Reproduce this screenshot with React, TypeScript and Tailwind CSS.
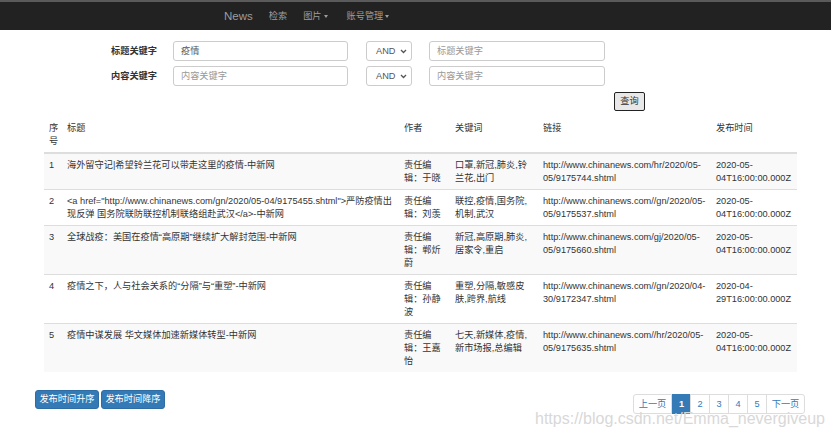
import React from "react";

type Row = {
  id: number;
  title: string[];
  author: string[];
  keywords: string[];
  link: string[];
  time: string[];
};

const rows: Row[] = [
  {
    id: 1,
    title: ["海外留守记|希望铃兰花可以带走这里的疫情-中新网"],
    author: ["责任编", "辑：于晓"],
    keywords: ["口罩,新冠,肺炎,铃", "兰花,出门"],
    link: ["http://www.chinanews.com/hr/2020/05-", "05/9175744.shtml"],
    time: ["2020-05-", "04T16:00:00.000Z"],
  },
  {
    id: 2,
    title: [
      '<a href="http://www.chinanews.com/gn/2020/05-04/9175455.shtml">严防疫情出',
      "现反弹 国务院联防联控机制联络组赴武汉</a>-中新网",
    ],
    author: ["责任编", "辑：刘羡"],
    keywords: ["联控,疫情,国务院,", "机制,武汉"],
    link: ["http://www.chinanews.com//gn/2020/05-", "05/9175537.shtml"],
    time: ["2020-05-", "04T16:00:00.000Z"],
  },
  {
    id: 3,
    title: ["全球战疫：美国在疫情“高原期”继续扩大解封范围-中新网"],
    author: ["责任编", "辑：郸炘", "蔚"],
    keywords: ["新冠,高原期,肺炎,", "居家令,重启"],
    link: ["http://www.chinanews.com/gj/2020/05-", "05/9175660.shtml"],
    time: ["2020-05-", "04T16:00:00.000Z"],
  },
  {
    id: 4,
    title: ["疫情之下，人与社会关系的“分隔”与“重塑”-中新网"],
    author: ["责任编", "辑：孙静", "波"],
    keywords: ["重塑,分隔,敏感皮", "肤,跨界,航线"],
    link: ["http://www.chinanews.com//gn/2020/04-", "30/9172347.shtml"],
    time: ["2020-04-", "29T16:00:00.000Z"],
  },
  {
    id: 5,
    title: ["疫情中谋发展 华文媒体加速新媒体转型-中新网"],
    author: ["责任编", "辑：王嘉", "怡"],
    keywords: ["七天,新媒体,疫情,", "新市场报,总编辑"],
    link: ["http://www.chinanews.com//hr/2020/05-", "05/9175635.shtml"],
    time: ["2020-05-", "04T16:00:00.000Z"],
  },
];

function Lines({ lines }: { lines: string[] }) {
  return (
    <>
      {lines.map((l, i) => (
        <div key={i} className="whitespace-nowrap">
          {l}
        </div>
      ))}
    </>
  );
}

function Chevron() {
  return (
    <svg width="7" height="5" viewBox="0 0 7 5" className="text-[#555]">
      <path d="M1 1 L3.5 3.5 L6 1" fill="none" stroke="currentColor" strokeWidth="1.3" />
    </svg>
  );
}

function Caret() {
  return <span className="ml-[2px] inline-block border-x-[2.5px] border-t-[3px] border-x-transparent border-t-[#9d9d9d] align-middle" />;
}

export default function App() {
  const td = "px-[5px] pt-[5px] pb-[4px] align-top";
  return (
    <div className="relative h-[440px] w-[831px] overflow-hidden bg-white font-['Liberation_Sans','Noto_Sans_CJK_SC',sans-serif] text-[9.2px] leading-[13px] text-[#333]">
      {/* navbar */}
      <div className="flex h-[30px] items-center border-t-2 border-[#5a5a5a] bg-[#222] pl-[224px] text-[#9d9d9d]">
        <span className="text-[11.5px]">News</span>
        <span className="ml-[16px]">检索</span>
        <span className="ml-[16px]">图片<Caret /></span>
        <span className="ml-[19px]">账号管理<Caret /></span>
      </div>

      {/* search form */}
      <div className="mt-[11px] flex flex-col gap-[5px]">
        {[
          { label: "标题关键字", value: "疫情", ph: "内容关键字" },
          { label: "内容关键字", value: "", ph: "内容关键字" },
        ].map((r, i) => (
          <div key={i} className="flex items-center">
            <div className="w-[157px] text-right font-bold">{r.label}</div>
            <div className="ml-[16px] flex h-[20px] w-[175px] items-center rounded-[3px] border border-[#ccc] px-[7px]">
              {r.value ? <span className="text-[#555]">{r.value}</span> : <span className="text-[#999]">{r.ph}</span>}
            </div>
            <div className="ml-[18px] flex h-[20px] w-[46px] items-center justify-between rounded-[3px] border border-[#ccc] pl-[9px] pr-[4px] text-[#555]">
              <span>AND</span>
              <Chevron />
            </div>
            <div className="ml-[17px] flex h-[20px] w-[176px] items-center rounded-[3px] border border-[#ccc] px-[7px] text-[#999]">
              {i === 0 ? "标题关键字" : "内容关键字"}
            </div>
          </div>
        ))}
      </div>
      <div className="mt-[6px] pl-[614px]">
        <button className="flex h-[19px] w-[31px] items-center justify-center rounded-[2px] border-[1.5px] border-[#222] bg-[#e8e8e8] text-[#333]">
          查询
        </button>
      </div>

      {/* table */}
      <div className="mt-[6px] pl-[44px]">
        <table className="w-[753px] table-fixed border-collapse">
          <colgroup>
            <col className="w-[18px]" />
            <col className="w-[337px]" />
            <col className="w-[51px]" />
            <col className="w-[88px]" />
            <col className="w-[173px]" />
            <col className="w-[86px]" />
          </colgroup>
          <thead>
            <tr className="border-b-2 border-[#ddd] text-left font-normal">
              <th className={`${td} font-normal`}>
                <Lines lines={["序", "号"]} />
              </th>
              <th className={`${td} font-normal`}>标题</th>
              <th className={`${td} font-normal`}>作者</th>
              <th className={`${td} font-normal`}>关键词</th>
              <th className={`${td} font-normal`}>链接</th>
              <th className={`${td} font-normal`}>发布时间</th>
            </tr>
          </thead>
          <tbody>
            {rows.map((r, i) => (
              <tr key={r.id} className={`border-t border-[#ddd] ${i % 2 === 0 ? "bg-[#f9f9f9]" : "bg-white"}`}>
                <td className={td}>{r.id}</td>
                <td className={td}>
                  <Lines lines={r.title} />
                </td>
                <td className={td}>
                  <Lines lines={r.author} />
                </td>
                <td className={td}>
                  <Lines lines={r.keywords} />
                </td>
                <td className={td}>
                  <Lines lines={r.link} />
                </td>
                <td className={td}>
                  <Lines lines={r.time} />
                </td>
              </tr>
            ))}
          </tbody>
        </table>
      </div>

      {/* bottom controls */}
      <div className="mt-[18px] flex items-start pl-[35px]">
        <button className="h-[19px] w-[64px] rounded-[3px] border border-[#2e6da4] bg-[#337ab7] text-white">发布时间升序</button>
        <button className="ml-[2px] h-[19px] w-[64px] rounded-[3px] border border-[#2e6da4] bg-[#337ab7] text-white">发布时间降序</button>
        <div className="ml-[468px] mt-[4px] flex h-[20px] text-[#337ab7]">
          <div className="flex w-[39px] items-center justify-center rounded-l-[3px] border border-[#ddd]">上一页</div>
          <div className="flex w-[19px] items-center justify-center border border-[#337ab7] bg-[#337ab7] font-bold text-white">1</div>
          {[2, 3, 4, 5].map((n) => (
            <div key={n} className="-ml-px flex w-[20px] items-center justify-center border border-[#ddd]">
              {n}
            </div>
          ))}
          <div className="-ml-px flex w-[39px] items-center justify-center rounded-r-[3px] border border-[#ddd]">下一页</div>
        </div>
      </div>

      {/* watermark */}
      <div className="pointer-events-none absolute left-[535px] top-[409px] text-[16px] leading-[20px] text-[#d8d8d8]">
        https://blog.csdn.net/Emma_nevergiveup
      </div>
    </div>
  );
}
